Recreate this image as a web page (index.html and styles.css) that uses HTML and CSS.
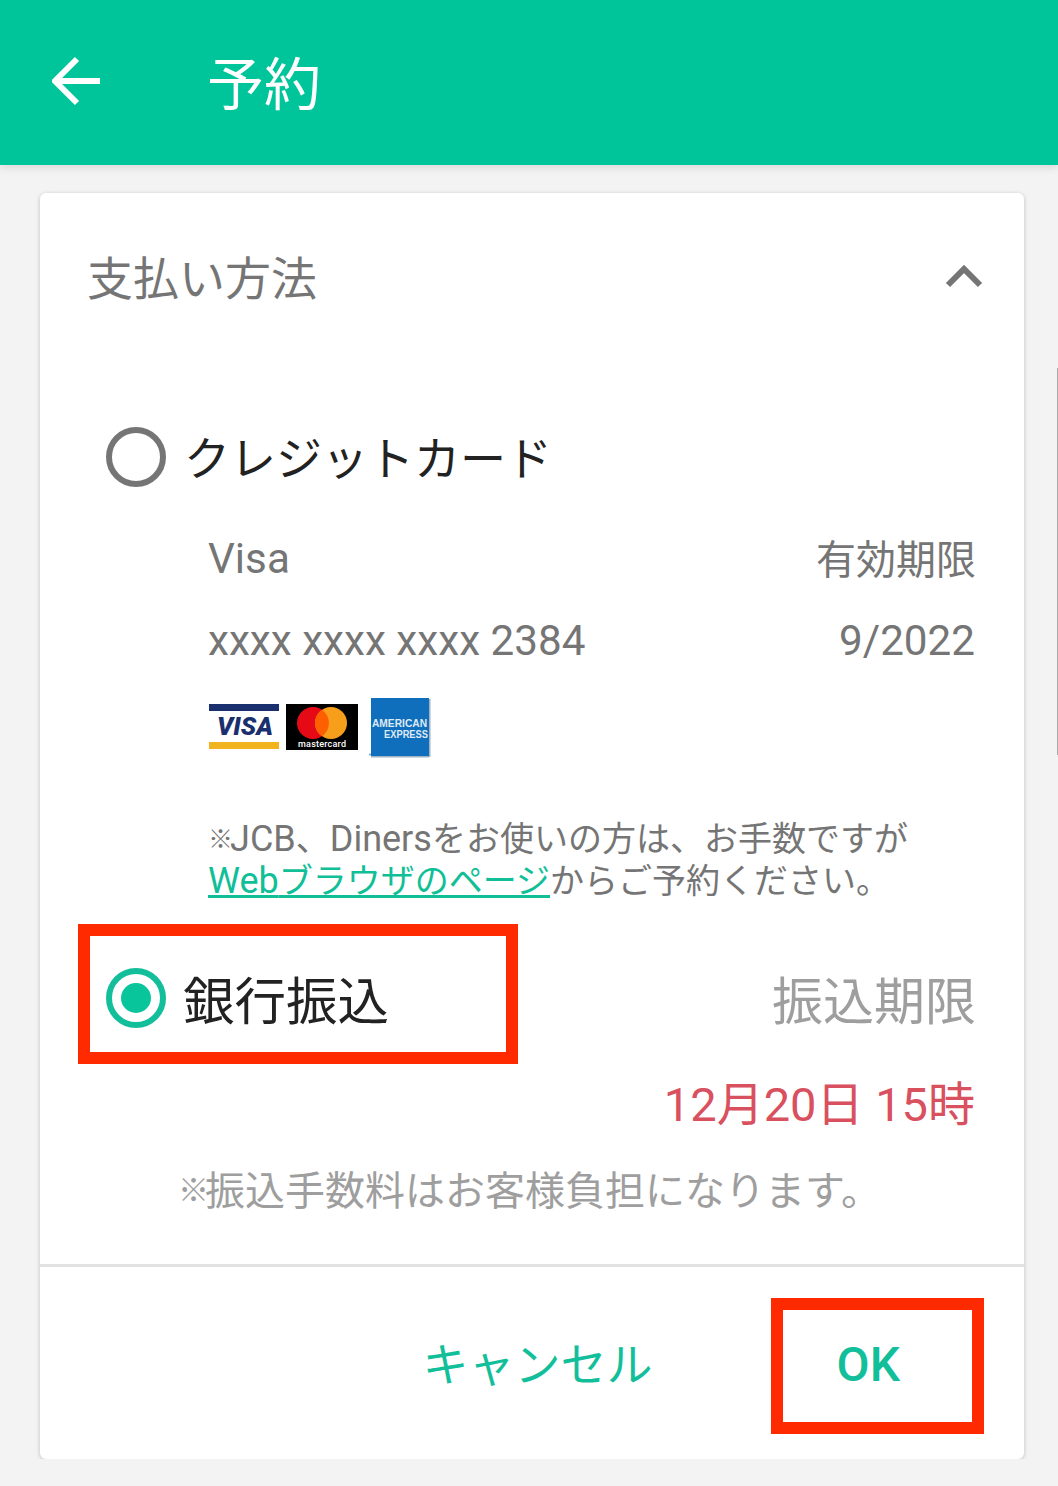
FILE: index.html
```html
<!DOCTYPE html>
<html lang="ja">
<head>
<meta charset="utf-8">
<title>予約</title>
<link rel="stylesheet" href="styles.css">
</head>
<body>
<header class="appbar">
  <svg class="back" width="50" height="50" viewBox="0 0 50 50"><path d="M48 25H5M25 3L3 25l22 22" fill="none" stroke="#fff" stroke-width="6"/></svg>
  <h1 class="appbar-title">予約</h1>
</header>
<main class="card">
  <div class="section-head">
    <h2 class="section-title">支払い方法</h2>
    <svg class="chevron" width="38" height="24" viewBox="0 0 38 24"><path d="M3 21L19 5l16 16" fill="none" stroke="#757575" stroke-width="6"/></svg>
  </div>
  <div class="option option-credit">
    <span class="radio"></span>
    <span class="option-label">クレジットカード</span>
  </div>
  <div class="card-info">
    <div class="info-row"><span class="latin-lg">Visa</span><span class="cjk">有効期限</span></div>
    <div class="info-row info-row-2"><span class="latin-lg">xxxx xxxx xxxx 2384</span><span class="latin-lg">9/2022</span></div>
    <div class="brands">
      <svg class="brand" width="70" height="45" viewBox="0 0 70 45">
        <rect width="70" height="45" fill="#fff"/>
        <rect width="70" height="7" fill="#1a2f6d"/>
        <rect y="38" width="70" height="7" fill="#f2b41e"/>
        <text x="36" y="31" class="visa-text" text-anchor="middle" textLength="56" lengthAdjust="spacingAndGlyphs">VISA</text>
      </svg>
      <svg class="brand" width="72" height="46" viewBox="0 0 72 46">
        <rect width="72" height="46" fill="#000"/>
        <circle cx="27" cy="19" r="16" fill="#e60a17"/>
        <circle cx="45" cy="19" r="16" fill="#f79e1b"/>
        <path d="M36 5.800A16 16 0 0 1 36 32.200A16 16 0 0 1 36 5.800z" fill="#ff5f00"/>
        <text x="36" y="43" class="mc-text" text-anchor="middle" textLength="48">mastercard</text>
      </svg>
      <svg class="brand brand-amex" width="62" height="60" viewBox="0 0 62 60">
        <rect x="2" width="58" height="58" fill="#0f6fbd"/>
        <rect x="2" y="58" width="58" height="1.500" fill="#9fb4c6"/>
        <rect x="60" y="1" width="1.500" height="58" fill="#9fb4c6"/>
        <circle cx="1" cy="56.500" r="1" fill="#6d9cc4"/>
        <text x="3" y="29" class="amex-text" textLength="55" lengthAdjust="spacingAndGlyphs">AMERICAN</text>
        <text x="15" y="40" class="amex-text" textLength="44" lengthAdjust="spacingAndGlyphs">EXPRESS</text>
      </svg>
    </div>
    <p class="note"><span class="kome">※</span><span class="latin">JCB</span>、<span class="latin">Diners</span>をお使いの方は、お手数ですが<br><a class="link" href="#"><span class="latin">Web</span>ブラウザのページ</a>からご予約ください。</p>
  </div>
  <div class="option option-bank">
    <span class="radio radio-on"><span class="radio-dot"></span></span>
    <span class="bank-label">銀行振込</span>
    <span class="deadline-label">振込期限</span>
  </div>
  <div class="deadline">12月20日 15時</div>
  <p class="fee"><span class="kome-fee">※</span>振込手数料はお客様負担になります。</p>
  <footer class="actions">
    <button class="action action-cancel">キャンセル</button>
    <button class="action action-ok">OK</button>
  </footer>
  <div class="mark mark-bank"></div>
  <div class="mark mark-ok"></div>
</main>
<div class="edge"></div>
</body>
</html>
```
FILE: styles.css
```css
* { box-sizing: border-box; }
html, body { margin: 0; padding: 0; }
body {
  position: relative;
  width: 1058px;
  height: 1486px;
  overflow: hidden;
  background: #f3f3f3;
  font-family: Roboto, "Noto Sans CJK JP", sans-serif;
}
.appbar {
  height: 165px;
  background: #00c49a;
  display: flex;
  align-items: center;
  padding-left: 52px;
  box-shadow: 0 3px 8px rgba(0,0,0,.1);
}
.back { margin-top: -4px; flex: none; }
.appbar-title {
  margin: -4px 0 0 105px;
  font: 400 57px/1 "Noto Sans CJK JP", sans-serif;
  color: #fff;
}
.card {
  position: relative;
  margin: 28px 34px 0 40px;
  width: 984px;
  height: 1266px;
  background: #fff;
  border-radius: 6px;
  box-shadow: 0 1px 4px rgba(0,0,0,.22);
  clip-path: inset(-10px -10px 0 -10px);
}
.section-head {
  display: flex;
  justify-content: space-between;
  align-items: center;
  height: 170px;
  padding: 0 41px 0 47px;
}
.section-title {
  margin: -6px 0 0;
  font: 400 46px/1 "Noto Sans CJK JP", sans-serif;
  color: #757575;
}
.chevron { margin-top: -5px; }
.option { display: flex; align-items: center; padding-left: 66px; }
.option-credit { height: 60px; margin-top: 64px; }
.radio {
  width: 60px;
  height: 60px;
  flex: none;
  border: 6px solid #757575;
  border-radius: 50%;
}
.option-label {
  margin: -4px 0 0 18px;
  font: 400 46px/1 "Noto Sans CJK JP", sans-serif;
  color: #222;
}
.card-info { padding: 0 49px 0 168px; margin-top: 44px; }
.info-row {
  display: flex;
  justify-content: space-between;
  height: 54px;
  align-items: center;
  font-size: 40px;
  color: #757575;
}
.info-row-2 { margin-top: 28px; }
.latin-lg { font-size: 42.200px; }
.cjk { font-family: "Noto Sans CJK JP", sans-serif; margin: -2px -1px 0 0; }
.brands { display: flex; align-items: flex-start; margin-top: 31px; height: 60px; padding-left: 1px; }
.brand { flex: none; display: block; margin-top: 6px; }
.brand + .brand { margin-left: 7px; }
.brand.brand-amex { margin: 0 0 0 11px; }
.visa-text { font: italic 900 26px Roboto, sans-serif; fill: #1a2f6d; }
.mc-text { font: 500 9px Roboto, sans-serif; fill: #fff; }
.amex-text { font: 700 10px "Liberation Sans", sans-serif; fill: #dfeaf4; }
.note {
  margin: 60px 0 0;
  font: 400 34px/42px Roboto, "Noto Sans CJK JP", sans-serif;
  color: #757575;
  white-space: nowrap;
}
.latin { font-size: 36px; }
.kome { font-size: 25px; line-height: 1; font-weight: 500; letter-spacing: -3px; vertical-align: 3px; }
.kome-fee { font-size: 31px; line-height: 1; font-weight: 500; letter-spacing: -4px; vertical-align: 4px; }
.link { color: #10bf97; text-decoration: underline; text-underline-offset: 2px; }
.option-bank { height: 60px; margin-top: 66px; padding-right: 49px; }
.radio-on {
  border-color: #12bf9a;
  display: flex;
  align-items: center;
  justify-content: center;
}
.radio-dot { width: 30px; height: 30px; border-radius: 50%; background: #08c59b; }
.bank-label {
  margin-left: 17px;
  font: 400 51.500px/1 "Noto Sans CJK JP", sans-serif;
  color: #222;
}
.deadline-label {
  margin: 0 -1px 0 auto;
  font: 400 51px/1 "Noto Sans CJK JP", sans-serif;
  color: #9e9e9e;
}
.deadline {
  margin-top: 53px;
  padding-right: 49px;
  text-align: right;
  font: 400 47px/1 Roboto, "Noto Sans CJK JP", sans-serif;
  color: #d9505f;
}
.fee {
  margin: 40px 0 0;
  padding-right: 5px;
  text-align: center;
  font: 400 40px/1 "Noto Sans CJK JP", sans-serif;
  color: #9e9e9e;
  white-space: nowrap;
}
.actions {
  position: absolute;
  left: 0;
  right: 0;
  bottom: 0;
  height: 195px;
  padding-top: 4px;
  border-top: 3px solid #e2e2e2;
  display: flex;
  align-items: center;
  justify-content: flex-end;
}
.action {
  border: 0;
  background: none;
  padding: 0;
  color: #12bf9a;
  font: 500 46px/1 Roboto, "Noto Sans CJK JP", sans-serif;
}
.action-cancel { margin-right: 184px; font-weight: 400; }
.action-ok { margin-right: 124px; font-size: 48px; }
.mark { position: absolute; border: 12px solid #ff2a00; }
.mark-bank { left: 38px; top: 731px; width: 440px; height: 140px; }
.mark-ok { left: 731px; top: 1105px; width: 213px; height: 136px; }
.edge {
  position: absolute;
  right: 0;
  top: 368px;
  width: 1px;
  height: 387px;
  background: #a8a8a8;
}
```
